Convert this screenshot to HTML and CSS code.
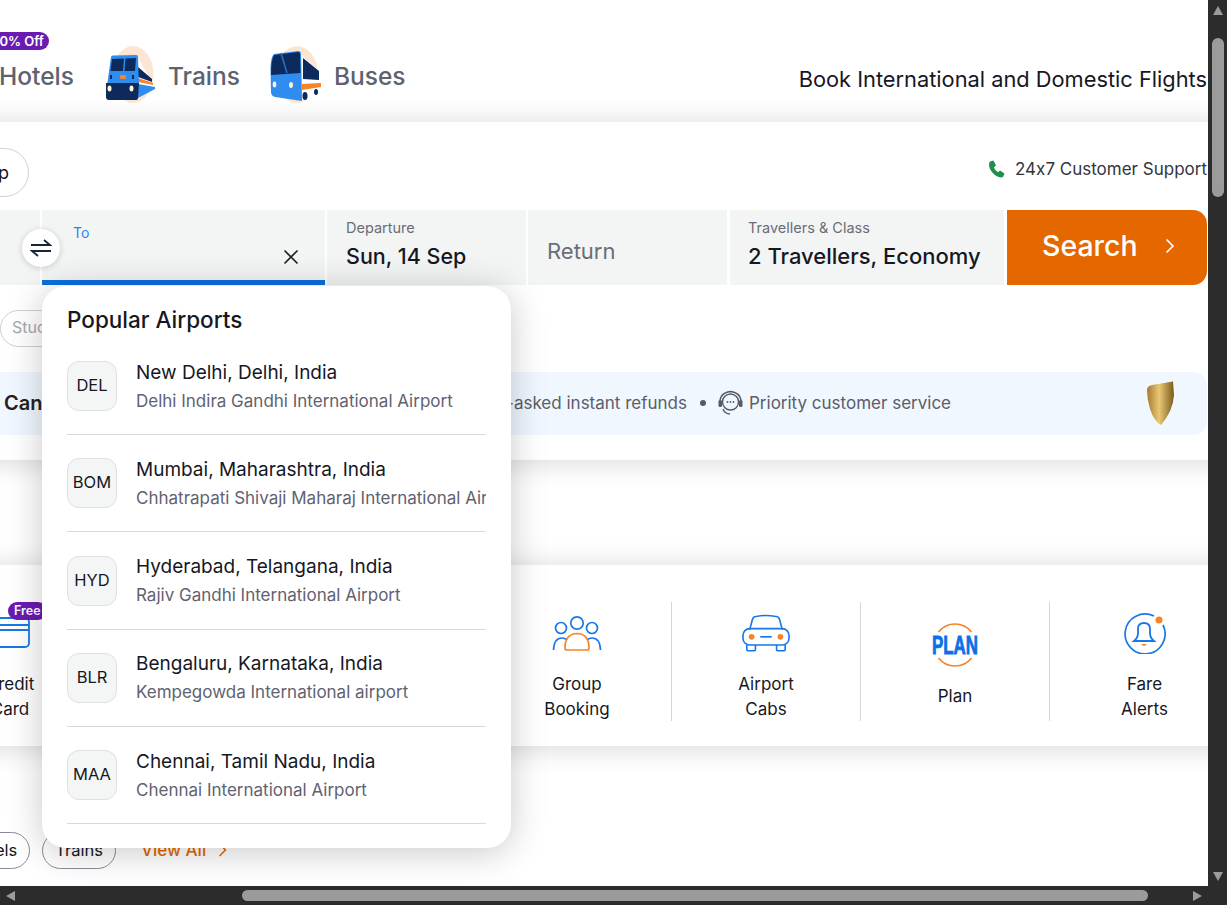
FILE: index.html
```html
<!DOCTYPE html>
<html lang="en">
<head>
  <meta charset="UTF-8">
  <title>Book International and Domestic Flights</title>
  <link rel="stylesheet" href="styles.css">
</head>
<body>
  <div class="window">
    <div class="stage">

      <!-- top nav -->
      <header class="top">
        <nav class="nav">
          <div class="nav-item nav-hotels">
            <span class="off-badge">50% Off</span>
            <span class="nav-text">Hotels</span>
          </div>
          <div class="nav-item">
            <svg class="nav-icon" width="51" height="58" viewBox="0 0 51 58">
              <ellipse cx="28" cy="28.5" rx="20.5" ry="28.5" fill="#fde5d3"/>
              <path d="M32 10 L48 38 L50 42 L32 46 Z" fill="#fff"/>
              <path d="M33 21 L47 33 L47 36 L33 31 Z" fill="#0d2a5c"/>
              <path d="M33 32 L48 37 L48 39 L33 36 Z" fill="#f5842a"/>
              <path d="M33 38 L50 41 L50 43 L33 52 Z" fill="#2f8df0"/>
              <path d="M6 11 Q6 9.5 8 9.5 L31 9 Q33 9 33 11 L34 40 L2 40 Z" fill="#2f8df0"/>
              <path d="M7 13 L19 12.5 L18 25 L5.5 25 Z M20.5 12.5 L31 12 L30 25 L19.5 25 Z" fill="#0d2a5c"/>
              <rect x="15" y="29" width="6" height="4" rx="1" fill="#f5842a"/>
              <rect x="5" y="29" width="2" height="4" fill="#0d2a5c"/>
              <rect x="27" y="29" width="2" height="4" fill="#0d2a5c"/>
              <path d="M1 37 L34 37 L33 52 Q33 54 31 54 L4 54 Q1 54 1 51 Z" fill="#0d2a5c"/>
              <ellipse cx="4.5" cy="42.5" rx="2" ry="3" fill="#fff3d8"/>
              <ellipse cx="26.5" cy="42.5" rx="2" ry="3" fill="#fff3d8"/>
            </svg>
            <span class="nav-text">Trains</span>
          </div>
          <div class="nav-item nav-buses">
            <svg class="nav-icon" width="53" height="58" viewBox="0 0 53 58">
              <ellipse cx="28" cy="28.5" rx="21" ry="28.5" fill="#fde5d3"/>
              <path d="M33 10 L51 25 L52 45 L46 52 L32 55 Z" fill="#fff"/>
              <path d="M5 8 L29 5 Q32 5 32 8 L33 55 L6 51 Q2 50 2 46 L1.500 22 Q2 10 5 8 Z" fill="#2f8df0"/>
              <path d="M5 9 L29 6 Q31 6 31 8 L31.500 27 L2 29 Q2 14 5 9 Z" fill="#0d2a5c"/>
              <path d="M12 7 L18 27" stroke="#2f6fc0" stroke-width="1.500"/>
              <path d="M34 12 L50 25 L50 34 L34 33 Z" fill="#0d2a5c"/>
              <path d="M33 38 L52 37 L52 41 L33 44 Z" fill="#f5842a"/>
              <ellipse cx="5.500" cy="38.500" rx="1.800" ry="3" fill="#fff3d8"/>
              <ellipse cx="22" cy="39" rx="2" ry="3" fill="#fff3d8"/>
              <ellipse cx="36" cy="50" rx="2.500" ry="4" fill="#0d2a5c"/>
              <ellipse cx="47" cy="46" rx="2" ry="3" fill="#0d2a5c"/>
            </svg>
            <span class="nav-text">Buses</span>
          </div>
        </nav>
        <h1 class="tagline">Book International and Domestic Flights</h1>
      </header>

      <!-- search card -->
      <section class="card search-card">
        <div class="trip-row">
          <span class="trip-pill">Round Trip</span>
          <div class="support">
            <svg width="17" height="18" viewBox="0 0 17 18"><path d="M2 1.500 L5.500 .5 L8 5.500 L5.800 7.500 Q7 10.500 10 12.300 L12 10.500 L16.500 13.500 L15 17 Q13 18 10 16.800 Q5 14.500 2 9 Q0 4.500 2 1.500 Z" fill="#1f8f4e"/></svg>
            <span>24x7 Customer Support</span>
          </div>
        </div>

        <div class="fields">
          <div class="field field-from"></div>
          <div class="field field-to">
            <span class="to-label">To</span>
            <svg class="to-clear" width="16" height="16" viewBox="0 0 16 16"><path d="M1.500 1.500 L14.500 14.500 M14.500 1.500 L1.500 14.500" stroke="#222" stroke-width="1.700"/></svg>
            <button class="swap" type="button">
              <svg width="22" height="20" viewBox="0 0 22 20"><path d="M1 7 L20 7 L14 2 M21 13 L2 13 L8 18" fill="none" stroke="#16243a" stroke-width="1.800"/></svg>
            </button>
          </div>
          <div class="field field-date">
            <span class="field-label">Departure</span>
            <span class="field-value">Sun, 14 Sep</span>
          </div>
          <div class="field field-return">Return</div>
          <div class="field field-pax">
            <span class="field-label">Travellers &amp; Class</span>
            <span class="field-value field-value-wide">2 Travellers, Economy</span>
          </div>
          <button class="search-btn" type="button">
            <span>Search</span>
            <svg width="10" height="16" viewBox="0 0 10 16"><path d="M1.500 1.500 L8 8 L1.500 14.500" fill="none" stroke="#fff" stroke-width="1.700"/></svg>
          </button>
        </div>

        <div class="chips"><span class="chip">Student</span></div>

        <div class="banner">
          <div class="banner-lead">
            <strong>Cancellation</strong>
            <span>No-questions-asked instant refunds</span>
          </div>
          <span class="banner-dot"></span>
          <svg class="headset" width="27" height="27" viewBox="0 0 27 27">
            <circle cx="13.500" cy="13" r="8" fill="none" stroke="#555a66" stroke-width="1.400"/>
            <path d="M3 15 Q2 4 13.500 2.500 Q25 4 24 15" fill="none" stroke="#555a66" stroke-width="1.400"/>
            <rect x="1.500" y="11" width="3.500" height="7" rx="1.500" fill="#555a66"/>
            <rect x="22" y="11" width="3.500" height="7" rx="1.500" fill="#555a66"/>
            <path d="M6 20 Q8 25 13 25" fill="none" stroke="#555a66" stroke-width="1.400"/>
            <circle cx="10.500" cy="13" r=".9" fill="#555a66"/><circle cx="13.500" cy="13" r=".9" fill="#555a66"/><circle cx="16.500" cy="13" r=".9" fill="#555a66"/>
          </svg>
          <span class="banner-text">Priority customer service</span>
          <svg class="shield" width="29" height="45" viewBox="0 0 29 45">
            <defs><linearGradient id="gold" x1="0" y1="0" x2="1" y2="0"><stop offset="0" stop-color="#a67a2c"/><stop offset=".45" stop-color="#e8c873"/><stop offset="1" stop-color="#7d5a1c"/></linearGradient></defs>
            <path d="M1 9 Q1 5 6 4 L27 .5 L28 14 Q27 30 15 44 Q8 40 4 28 Q1 18 1 9 Z" fill="url(#gold)"/>
          </svg>
        </div>
      </section>

      <!-- services strip -->
      <section class="card services">
        <div class="svc">
          <div class="svc-icon">
            <span class="free-badge">Free</span>
            <svg width="42" height="32" viewBox="0 0 42 32"><rect x="1" y="1" width="39" height="29" rx="4" fill="none" stroke="#1877e8" stroke-width="1.800"/><path d="M1 8 H40 M1 13 H40" stroke="#1877e8" stroke-width="1.800"/></svg>
          </div>
          <div class="svc-label">Credit<br>Card</div>
        </div>
        <div class="svc"></div>
        <div class="svc"></div>
        <div class="svc">
          <div class="svc-icon">
            <svg width="50" height="36" viewBox="0 0 50 36">
              <circle cx="25" cy="8" r="6.200" fill="none" stroke="#1877e8" stroke-width="1.700"/>
              <circle cx="9" cy="13" r="5.500" fill="none" stroke="#1877e8" stroke-width="1.700"/>
              <circle cx="40" cy="13" r="5.500" fill="none" stroke="#1877e8" stroke-width="1.700"/>
              <path d="M1.500 35 Q2 23 10 23 Q13 23 15 25 M35 25 Q37 23 40 23 Q48 23 48.500 35" fill="none" stroke="#1877e8" stroke-width="1.700"/>
              <path d="M13 33 Q13 19 25 18.500 Q37 19 37 33 Q37 35 35 35 L15 35 Q13 35 13 33 Z" fill="none" stroke="#f5842a" stroke-width="1.700"/>
            </svg>
          </div>
          <div class="svc-label">Group<br>Booking</div>
        </div>
        <div class="svc">
          <div class="svc-icon">
            <svg width="48" height="38" viewBox="0 0 50 39">
              <path d="M8 16 L11 5 Q12 2 16 2 Q25 .5 34 2 Q38 2 39 5 L42 16" fill="none" stroke="#1877e8" stroke-width="1.700"/>
              <rect x="1" y="15" width="48" height="17" rx="7" fill="none" stroke="#1877e8" stroke-width="1.700"/>
              <path d="M5 32 V37 Q5 38 6 38 L13 38 Q14 38 14 37 V32 M36 32 V37 Q36 38 37 38 L44 38 Q45 38 45 37 V32" fill="none" stroke="#1877e8" stroke-width="1.700"/>
              <circle cx="10" cy="23.500" r="3" fill="#f5842a"/><circle cx="40" cy="23.500" r="3" fill="#f5842a"/>
              <path d="M19 23.500 H31" stroke="#1877e8" stroke-width="1.700"/>
            </svg>
          </div>
          <div class="svc-label">Airport<br>Cabs</div>
        </div>
        <div class="svc">
          <div class="svc-icon svc-icon-plan">
            <svg width="46" height="46" viewBox="0 0 46 46">
              <path d="M6.500 10 A21 21 0 0 1 39.500 10 M39.500 36 A21 21 0 0 1 6.500 36" fill="none" stroke="#f5842a" stroke-width="1.700"/>
              <text class="plan-word" x="0" y="32" textLength="46" lengthAdjust="spacingAndGlyphs">PLAN</text>
            </svg>
          </div>
          <div class="svc-label">Plan</div>
        </div>
        <div class="svc">
          <div class="svc-icon">
            <svg width="44" height="42" viewBox="0 0 44 42">
              <path d="M31 4 A20 20 0 1 0 40 13" fill="none" stroke="#1877e8" stroke-width="1.700"/>
              <circle cx="36" cy="8" r="3.500" fill="#f5842a"/>
              <path d="M11 29 H31 Q27 26 27 21 V17 Q27 11 21 11 Q15 11 15 17 V21 Q15 26 11 29 Z" fill="none" stroke="#1877e8" stroke-width="1.800"/>
              <path d="M18 32 H24 Q21 36 18 32 Z" fill="#f5842a"/>
            </svg>
          </div>
          <div class="svc-label">Fare<br>Alerts</div>
        </div>
      </section>

      <div class="tabs">
        <span class="tab tab-hotels">Hotels</span>
        <span class="tab">Trains</span>
        <span class="view-all">View All
          <svg width="9" height="14" viewBox="0 0 9 14"><path d="M1.500 1 L7.500 7 L1.500 13" fill="none" stroke="#e56700" stroke-width="1.500"/></svg>
        </span>
      </div>

      <!-- airport dropdown -->
      <div class="popup">
        <h2 class="popup-title">Popular Airports</h2>
        <div class="airport">
          <span class="code">DEL</span>
          <div class="airport-info">
            <div class="city">New Delhi, Delhi, India</div>
            <div class="airport-name">Delhi Indira Gandhi International Airport</div>
          </div>
        </div>
        <div class="airport">
          <span class="code">BOM</span>
          <div class="airport-info">
            <div class="city">Mumbai, Maharashtra, India</div>
            <div class="airport-name">Chhatrapati Shivaji Maharaj International Airport</div>
          </div>
        </div>
        <div class="airport">
          <span class="code">HYD</span>
          <div class="airport-info">
            <div class="city">Hyderabad, Telangana, India</div>
            <div class="airport-name">Rajiv Gandhi International Airport</div>
          </div>
        </div>
        <div class="airport">
          <span class="code">BLR</span>
          <div class="airport-info">
            <div class="city">Bengaluru, Karnataka, India</div>
            <div class="airport-name">Kempegowda International airport</div>
          </div>
        </div>
        <div class="airport">
          <span class="code">MAA</span>
          <div class="airport-info">
            <div class="city">Chennai, Tamil Nadu, India</div>
            <div class="airport-name">Chennai International Airport</div>
          </div>
        </div>
      </div>
    </div>

    <!-- scrollbars -->
    <div class="vbar">
      <span class="arrow arrow-up"></span>
      <span class="vthumb"></span>
      <span class="arrow arrow-down"></span>
    </div>
    <div class="hbar">
      <span class="arrow arrow-left"></span>
      <span class="hthumb"></span>
      <span class="arrow arrow-right"></span>
    </div>
    <div class="corner"></div>
  </div>
</body>
</html>
```

FILE: styles.css
```css
* {
  margin: 0;
  padding: 0;
  box-sizing: border-box;
}
body {
  font-family: Inter, "Noto Sans", sans-serif;
  font-feature-settings: "calt" 0;
  background-color: #fff;
  color: #16181f;
  overflow: hidden;
}
.window {
  display: grid;
  grid-template-columns: 1208px 19px;
  grid-template-rows: 886px 19px;
  width: 1227px;
  height: 905px;
}
.stage {
  position: relative;
  overflow: hidden;
  background-color: #fff;
}

/* top nav */
.top {
  display: flex;
  justify-content: space-between;
  height: 122px;
  padding-right: 1px;
}
.nav {
  display: flex;
  align-items: flex-start;
  padding-top: 46px;
  margin-left: -1px;
}
.nav-item {
  position: relative;
  display: flex;
  align-items: center;
  height: 58px;
}
.nav-icon {
  margin-right: 12px;
}
.nav-text {
  font-size: 24.5px;
  font-weight: 500;
  color: #5e616e;
  margin-top: 2px;
}
.nav-hotels {
  margin-right: 31px;
}
.nav-buses {
  margin-left: 29px;
}
.off-badge {
  position: absolute;
  top: -14px;
  right: 25px;
  padding: 0 5px;
  height: 18px;
  line-height: 18px;
  border-radius: 9px;
  background-color: #6a1bb0;
  color: #fff;
  font-size: 13px;
  font-weight: 600;
  white-space: nowrap;
}
.tagline {
  font-size: 21.8px;
  font-weight: 400;
  margin-top: 65px;
  height: 28px;
  line-height: 28px;
  white-space: nowrap;
}

/* cards */
.card {
  background-color: #fff;
  margin: 0 -40px;
  box-shadow: 0 2px 26px rgba(0,0,0,0.16);
}
.search-card {
  height: 338px;
  padding: 26px 41px 0 40px;
}
.trip-row {
  display: flex;
  justify-content: space-between;
  align-items: center;
  height: 49px;
}
.trip-pill {
  display: flex;
  align-items: center;
  justify-content: flex-end;
  height: 49px;
  width: 130px;
  margin-left: -101px;
  padding-right: 19px;
  border: 1px solid #cfd0d6;
  border-radius: 25px;
  font-size: 18px;
  white-space: nowrap;
}
.support {
  display: flex;
  align-items: center;
  gap: 10px;
  margin-bottom: 8px;
  font-size: 17px;
  color: #33353c;
}

/* search fields */
.fields {
  display: flex;
  gap: 2px;
  height: 75px;
  margin-top: 13px;
}
.field {
  position: relative;
  display: flex;
  flex-direction: column;
  background-color: #f3f5f5;
}
.field-from {
  width: 40px;
}
.field-to {
  width: 283px;
  padding-left: 31px;
  border-bottom: 5px solid #0b6fe0;
}
.to-label {
  margin-top: 14px;
  font-size: 14px;
  color: #2b86ea;
}
.to-clear {
  position: absolute;
  right: 26px;
  top: 39px;
}
.swap {
  position: absolute;
  left: -20px;
  top: 19px;
  display: flex;
  align-items: center;
  justify-content: center;
  width: 38px;
  height: 38px;
  border: none;
  border-radius: 50%;
  background-color: #fff;
  box-shadow: 0 1px 6px rgba(0,0,0,0.18);
}
.field-date {
  width: 199px;
  padding: 9px 0 0 19px;
}
.field-return {
  width: 199px;
  padding: 6px 0 0 19px;
  justify-content: center;
  font-size: 22px;
  color: #6a6d78;
}
.field-pax {
  width: 274px;
  margin-left: 1px;
  padding: 9px 0 0 18px;
}
.field-label {
  font-size: 14.5px;
  color: #6a6d78;
  line-height: 18px;
}
.field-value {
  margin-top: 5px;
  font-size: 21.5px;
  font-weight: 500;
  line-height: 28px;
  white-space: nowrap;
}
.field-value-wide {
  font-size: 22px;
}
.search-btn {
  display: flex;
  align-items: center;
  width: 200px;
  margin-left: 1px;
  padding: 0 32px 4px 35px;
  justify-content: space-between;
  border: none;
  border-radius: 0 14px 14px 0;
  background-color: #e56700;
  color: #fff;
  font-family: inherit;
  font-size: 28.5px;
  font-weight: 500;
}

/* chips + banner */
.chips {
  margin-top: 25px;
  height: 37px;
}
.chip {
  display: inline-block;
  height: 37px;
  line-height: 33px;
  padding: 0 11px;
  border: 1px solid #cfd0d6;
  border-radius: 19px;
  font-size: 16px;
  color: #a6a9b3;
}
.banner {
  display: flex;
  align-items: center;
  height: 63px;
  margin: 25px 0 0 -30px;
  padding: 0 0 2px 34px;
  border-radius: 14px;
  background-color: #f0f7fe;
  font-size: 17px;
  color: #5a5d6a;
}
.banner-lead {
  display: flex;
  justify-content: space-between;
  align-items: center;
  width: 683px;
}
.banner-lead strong {
  font-size: 20px;
  font-weight: 600;
  color: #222;
}
.banner-dot {
  width: 6px;
  height: 6px;
  margin: 0 11px 0 13px;
  border-radius: 50%;
  background-color: #555a66;
}
.headset {
  margin-right: 5px;
}
.banner-text {
  flex: 1;
}
.shield {
  margin: 2px 32px 0 0;
}

/* services strip */
.services {
  display: flex;
  height: 181px;
  margin-top: 105px;
  margin-left: -84px;
  padding-top: 37px;
}
.svc {
  flex: 0 0 189px;
  height: 119px;
  border-right: 1px solid #d6d6da;
}
.svc:last-child {
  border-right: none;
}
.svc-icon {
  position: relative;
  display: flex;
  align-items: center;
  justify-content: center;
  height: 69px;
  padding-bottom: 7px;
}
.svc-icon-plan {
  padding: 17px 0 0;
}
.plan-word {
  font-family: "Liberation Sans", sans-serif;
  font-size: 25px;
  font-weight: 700;
  fill: #0a6fe8;
  stroke: #0a6fe8;
  stroke-width: .8;
}
.svc-label {
  display: flex;
  align-items: center;
  justify-content: center;
  height: 50px;
  padding-top: 1px;
  font-size: 17px;
  line-height: 25px;
  text-align: center;
}
.free-badge {
  position: absolute;
  top: 0;
  left: 92px;
  height: 18px;
  padding: 0 6px;
  line-height: 18px;
  border-radius: 9px;
  background-color: #6a1bb0;
  color: #fff;
  font-size: 12.5px;
  font-weight: 600;
}

/* tabs under strip */
.tabs {
  display: flex;
  align-items: center;
  gap: 12px;
  margin-top: 86px;
  height: 37px;
  font-size: 16.5px;
}
.tab {
  display: flex;
  align-items: center;
  height: 37px;
  padding: 0 12px 2px;
  border: 1px solid #8a8a9a;
  border-radius: 19px;
}
.tab-hotels {
  margin-left: -45.5px;
}
.view-all {
  display: flex;
  align-items: center;
  gap: 12px;
  margin: 0 0 2px 13px;
  color: #e56700;
  font-size: 17px;
  font-weight: 500;
}

/* dropdown */
.popup {
  position: absolute;
  left: 42px;
  top: 286px;
  width: 469px;
  height: 562px;
  padding: 0 25px;
  border-radius: 24px;
  background-color: #fff;
  box-shadow: 0 4px 36px rgba(0,0,0,0.22);
}
.popup-title {
  height: 51.9px;
  padding-top: 20px;
  font-size: 22.5px;
  font-weight: 500;
  line-height: 28px;
}
.airport {
  display: flex;
  align-items: center;
  gap: 19px;
  height: 97.25px;
  border-bottom: 1px solid #d8d9dd;
}
.code {
  flex: 0 0 50px;
  height: 50px;
  line-height: 47px;
  border: 1px solid #dfe0e2;
  border-radius: 12px;
  background-color: #f4f6f6;
  text-align: center;
  font-size: 16.5px;
}
.airport-info {
  min-width: 0;
  flex: 1;
}
.city {
  padding-top: 1px;
  font-size: 19px;
  line-height: 24px;
  white-space: nowrap;
}
.airport-name {
  margin-top: 4px;
  font-size: 17px;
  line-height: 24px;
  color: #5f6270;
  white-space: nowrap;
  overflow: hidden;
}

/* fake window scrollbars */
.vbar, .hbar, .corner {
  background-color: #2c2c2c;
}
.vbar {
  display: flex;
  flex-direction: column;
  align-items: center;
  padding-top: 6px;
}
.vthumb {
  width: 12px;
  height: 159px;
  margin-top: 23px;
  border-radius: 6px;
  background-color: #9b9b9b;
}
.hbar {
  display: flex;
  align-items: center;
  padding-left: 6px;
}
.hthumb {
  width: 906px;
  height: 11px;
  margin-left: 227px;
  border-radius: 6px;
  background-color: #9b9b9b;
}
.arrow {
  width: 0;
  height: 0;
}
.arrow-up {
  border: 5px solid transparent;
  border-top: 0;
  border-bottom: 9px solid #9b9b9b;
}
.arrow-down {
  margin-top: 675px;
  border: 5px solid transparent;
  border-bottom: 0;
  border-top: 9px solid #9b9b9b;
}
.arrow-left {
  border: 5px solid transparent;
  border-left: 0;
  border-right: 9px solid #9b9b9b;
}
.arrow-right {
  margin-left: 45px;
  border: 5px solid transparent;
  border-right: 0;
  border-left: 9px solid #9b9b9b;
}
```
